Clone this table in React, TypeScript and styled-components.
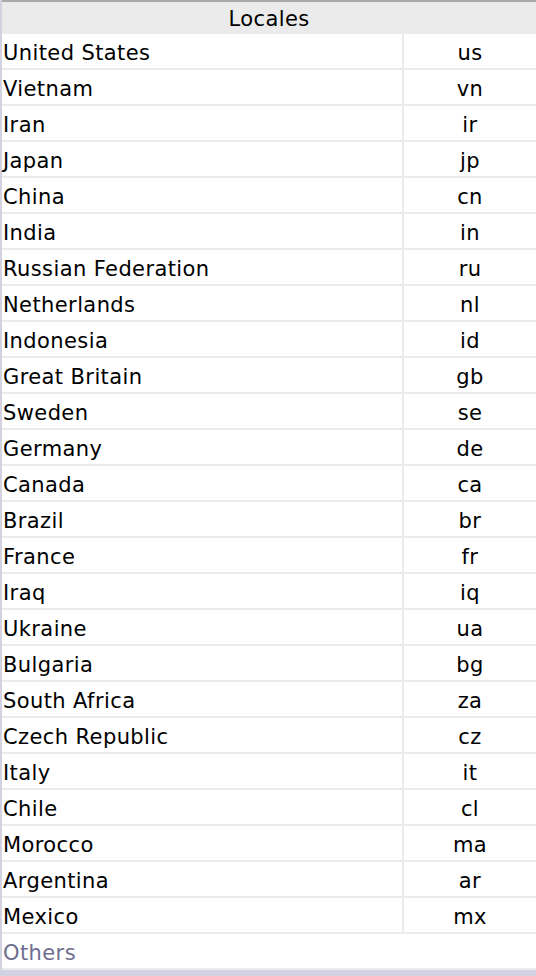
import React from "react";
import styled, { createGlobalStyle } from "styled-components";

const GlobalStyle = createGlobalStyle`
    html, body {
        margin: 0;
        padding: 0;
        background: #d2d2e2;
    }
`;

const Page = styled.div`
    padding-left: 2px;
    background: #d2d2e2;
    font-family: "DejaVu Sans", Verdana, sans-serif;
`;

const Table = styled.table`
    width: 534px;
    border-collapse: separate;
    border-spacing: 0;
    table-layout: fixed;
    background: #ffffff;
    border-top: 2px solid #a9a9a9;
    font-size: 21px;
    letter-spacing: 0.4px;
    color: #000000;
`;

const Col = styled.col<{ $w: number }>`
    width: ${(p) => p.$w}px;
`;

const Th = styled.th`
    height: 31px;
    padding: 1px 0 0;
    background: #ebebeb;
    font-weight: normal;
    text-align: center;
`;

const NameCell = styled.td`
    height: 31px;
    padding: 3px 0 0 1px;
    border-right: 2px solid #ebebeb;
    border-bottom: 2px solid #ebebeb;
    text-align: left;
`;

const CodeCell = styled.td`
    height: 31px;
    padding: 3px 0 0;
    border-bottom: 2px solid #ebebeb;
    text-align: center;
`;

const OthersCell = styled.td`
    height: 31px;
    padding: 3px 0 0 1px;
    border-bottom: 2px solid #ebebeb;
    color: #6e6e90;
`;

const locales: [string, string][] = [
    ["United States", "us"],
    ["Vietnam", "vn"],
    ["Iran", "ir"],
    ["Japan", "jp"],
    ["China", "cn"],
    ["India", "in"],
    ["Russian Federation", "ru"],
    ["Netherlands", "nl"],
    ["Indonesia", "id"],
    ["Great Britain", "gb"],
    ["Sweden", "se"],
    ["Germany", "de"],
    ["Canada", "ca"],
    ["Brazil", "br"],
    ["France", "fr"],
    ["Iraq", "iq"],
    ["Ukraine", "ua"],
    ["Bulgaria", "bg"],
    ["South Africa", "za"],
    ["Czech Republic", "cz"],
    ["Italy", "it"],
    ["Chile", "cl"],
    ["Morocco", "ma"],
    ["Argentina", "ar"],
    ["Mexico", "mx"],
];

const App: React.FC = () => {
    return (
        <Page>
            <GlobalStyle />
            <Table>
                <colgroup>
                    <Col $w={402} />
                    <Col $w={132} />
                </colgroup>
                <thead>
                    <tr>
                        <Th colSpan={2}>Locales</Th>
                    </tr>
                </thead>
                <tbody>
                    {locales.map(([name, code]) => (
                        <tr key={code}>
                            <NameCell>{name}</NameCell>
                            <CodeCell>{code}</CodeCell>
                        </tr>
                    ))}
                    <tr>
                        <OthersCell colSpan={2}>Others</OthersCell>
                    </tr>
                </tbody>
            </Table>
        </Page>
    );
};

export default App;
